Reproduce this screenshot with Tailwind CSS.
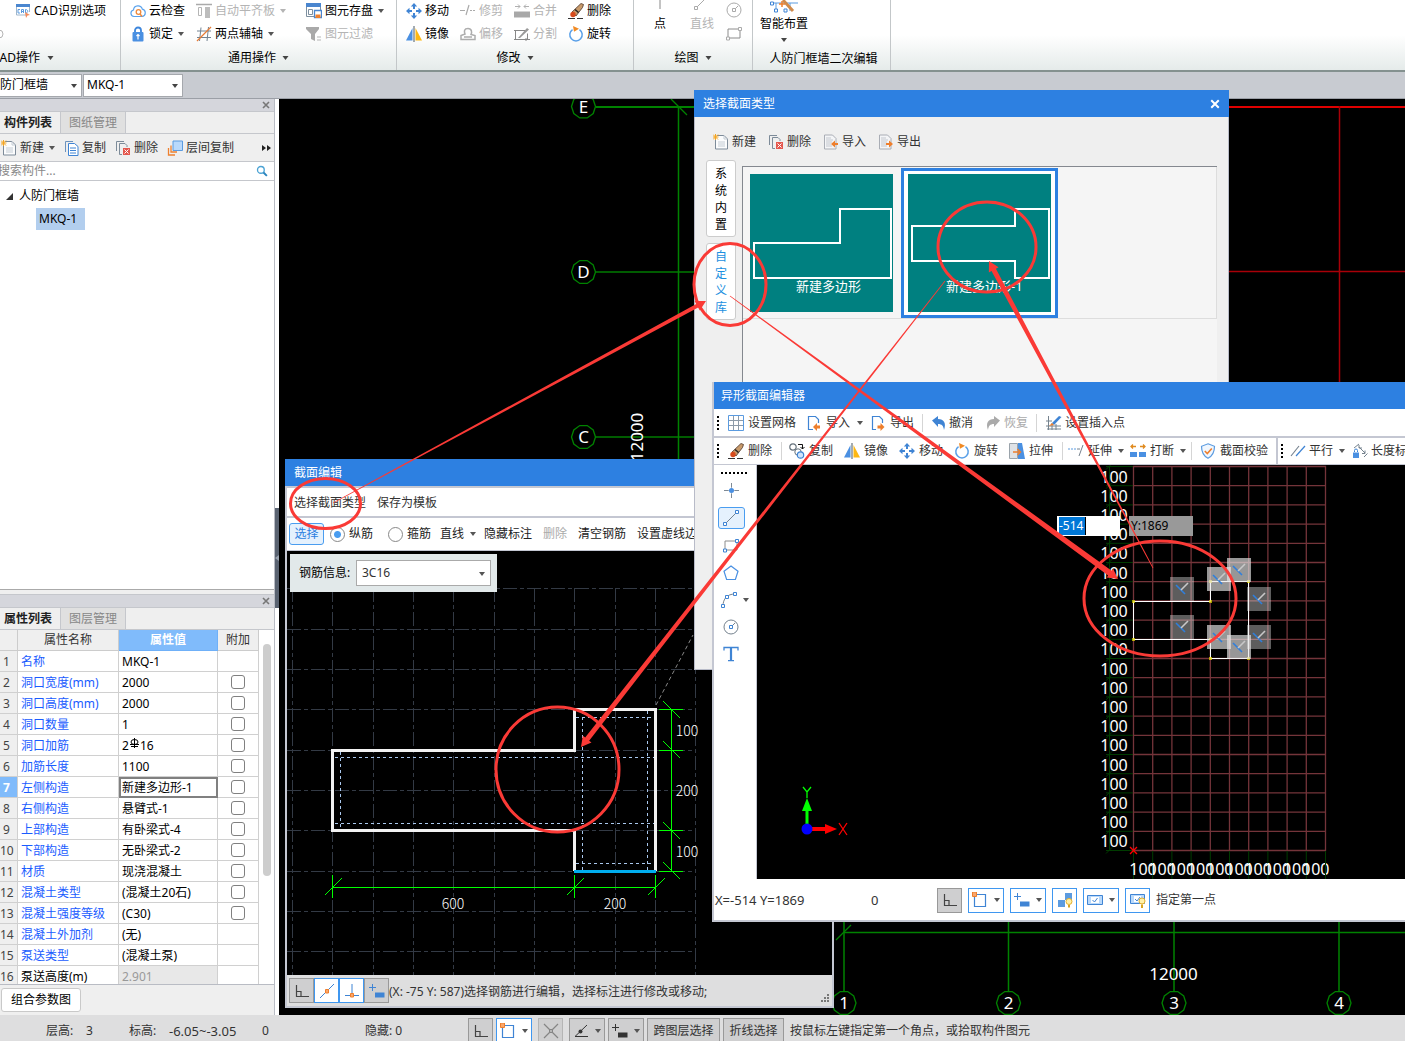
<!DOCTYPE html>
<html lang="zh-CN">
<head>
    <meta charset="UTF-8">
    <meta name="viewport" content="width=device-width, initial-scale=1.0">
    <title>人防门框墙</title>
    <script src="https://cdn.jsdelivr.net/npm/@tailwindcss/browser@4"></script>
</head>
<body class="relative flex h-screen flex-col overflow-hidden whitespace-nowrap bg-black font-['Noto_Sans','Noto_Sans_CJK_SC',sans-serif] text-[12px] leading-[18px] text-black">

    <!-- Icon sprite -->
    <svg class="hidden">
        <symbol id="caret" viewBox="0 0 6 4"><path d="M0 0h6L3 4z" fill="currentColor"/></symbol>
        <symbol id="close" viewBox="0 0 8 8"><path d="M1 1l6 6M7 1L1 7" stroke="currentColor" stroke-width="1.6" fill="none"/></symbol>
        <symbol id="cad" viewBox="0 0 16 16"><path d="M1.500 3v9h10M14.500 3v6" fill="none" stroke="#9fb6cc"/><path d="M1 1h14v3H1z" fill="#4a86cf"/><path d="M5 6.500H3v3.500h2M6.500 10V6.500h2V10M6.500 8.500h2M10.500 10V6.500c3 0 3 3.500 0 3.500" fill="none" stroke="#5b9be0"/><path d="M10 9l5 3-2.500.5L11 15z" fill="#f58b5b"/></symbol>
        <symbol id="cloud" viewBox="0 0 16 16"><path d="M4 13.500a3.300 3.300 0 0 1-.5-6.500 4.500 4.500 0 0 1 8.800-.8 3.700 3.700 0 0 1-.3 7.300z" fill="none" stroke="#5aa2ec" stroke-width="1.200"/><circle cx="8.500" cy="9" r="2.300" fill="none" stroke="#ef8a3c" stroke-width="1.300"/><path d="M10 11l2 2.500" stroke="#ef8a3c" stroke-width="1.500"/></symbol>
        <symbol id="lock" viewBox="0 0 16 16"><path d="M5 7V4.500a3 3 0 0 1 6 0V7" fill="none" stroke="#3d86dc" stroke-width="1.800"/><rect x="2.500" y="6" width="11" height="9.500" rx="1" fill="#4a90e2"/><path d="M8 8.500v5M6.500 10L8 8.500 9.500 10" stroke="#fff" stroke-width="1.200" fill="none"/></symbol>
        <symbol id="align" viewBox="0 0 16 16"><path d="M0 1.500h16" stroke="#aaa" stroke-width="1.500"/><path d="M2.500 4.500h3v8h-3z" fill="none" stroke="#b5b5b5"/><path d="M9 4h5v11H9z" fill="#bdbdbd"/></symbol>
        <symbol id="axis" viewBox="0 0 16 16"><path d="M5 1.500L3.500 15M12.500 1L11 15M1 5h14M1 11.500h14" stroke="#738392" fill="none"/><path d="M1 15L15 1" stroke="#e77b35" stroke-width="1.300"/></symbol>
        <symbol id="save" viewBox="0 0 16 16"><path d="M.5 1v12.500H9M14.500 1v6" fill="none" stroke="#7d8f9f"/><path d="M0 0h15v4H0z" fill="#4a86cf"/><path d="M2.500 6.500h4v5h-4z" fill="none" stroke="#7d8f9f"/><path d="M8.500 7.500h7v7h-7z" fill="#fff" stroke="#4a86cf" stroke-width="1.300"/><path d="M9.500 11.500h5V15h-5z" fill="#ee8130"/></symbol>
        <symbol id="filter" viewBox="0 0 16 16"><path d="M0 1h13v2L9 8v7l-4-2V8L0 3z" fill="#a9a9a9"/><path d="M11 11h4M11 14h4" stroke="#b5b5b5"/></symbol>
        <symbol id="move" viewBox="0 0 16 16"><path d="M8 0l3.200 3.500H9V6H7V3.500H4.800zM8 16l3.200-3.500H9V10H7v2.500H4.800zM0 8l3.500-3.200V7H6v2H3.500v2.200zM16 8l-3.500-3.200V7H10v2h2.500v2.200z" fill="#3f84d4"/></symbol>
        <symbol id="mirror" viewBox="0 0 16 16"><path d="M6.500 2v12.500H0z" fill="#4a90e2"/><path d="M9.500 2v12.500H16z" fill="#fdb813"/><path d="M8 0v16" stroke="#67737d" stroke-width="1.200"/></symbol>
        <symbol id="trim" viewBox="0 0 16 16"><path d="M0 7.500h5M6 12L9 2M10 7.500h2M13 7.500h2" stroke="#aaa" stroke-width="1.200"/></symbol>
        <symbol id="offset" viewBox="0 0 16 16"><path d="M1 13.500h14v-4l-4-1c1-2 1-6-3-6s-4 3-3 5.500l-4 1.500zM4 11h8" fill="none" stroke="#adadad" stroke-width="1.500"/></symbol>
        <symbol id="merge" viewBox="0 0 16 16"><path d="M1 9h6v5H1zM8 9h7v5H8z" fill="#a8a8a8"/><path d="M0 8.500h16v6H0z" fill="#a8a8a8"/><path d="M1 3.500h5M4 1.500l2 2-2 2M15 3.500h-5M12 1.500l-2 2 2 2" stroke="#b0b0b0" fill="none"/></symbol>
        <symbol id="split" viewBox="0 0 16 16"><path d="M11 4.500H1.500v9h12v-6M0 4.500h3M12 15v-3M0 13.500h16" fill="none" stroke="#888"/><path d="M4 12L13 2l2 1.500L6 12z" fill="#999"/></symbol>
        <symbol id="eraser" viewBox="0 0 16 16"><path d="M0 15.500h7M9 15.500h6" stroke="#333"/><path d="M4 9l9-8.500 2.500 1-1 3L8 13z" fill="#c89a6a" stroke="#4b3527" stroke-width=".8"/><path d="M7 6.500l3.500 3" stroke="#222" stroke-width="1.500"/><circle cx="5" cy="11.500" r="2.700" fill="#d64a1c"/></symbol>
        <symbol id="rotate" viewBox="0 0 16 16"><path d="M4.500 3.600A6.200 6.200 0 1 0 11.500 3.600" fill="none" stroke="#5aa0e8" stroke-width="1.500"/><path d="M5 0l6 2.700-5 3z" fill="#f08a24"/></symbol>
        <symbol id="circ" viewBox="0 0 16 16"><circle cx="8" cy="8" r="7" fill="none" stroke="currentColor"/><path d="M8 8l4-4" stroke="currentColor"/><path d="M6.500 6.500h3v3h-3z" fill="#fff" stroke="#3f84d4"/></symbol>
        <symbol id="circgray" viewBox="0 0 16 16"><circle cx="8" cy="8" r="7" fill="none" stroke="#aaa"/><path d="M8 8l4-4" stroke="#aaa"/><path d="M6.500 6.500h3v3h-3z" fill="#fff" stroke="#aaa"/></symbol>
        <symbol id="rect" viewBox="0 0 16 16"><path d="M2 3h12v9H2z" fill="none" stroke="#8c8c8c"/><path d="M.5 11h3v3h-3zM12.500 1.500h3v3h-3z" fill="#fff" stroke="currentColor"/></symbol>
        <symbol id="new" viewBox="0 0 16 16"><path d="M4 1.500h7L14.500 5v10h-12V6" fill="#fbfcfd" stroke="#7d8b99"/><path d="M11 1.500V5h3.500M5 8h7M5 10h7M5 12h7" fill="none" stroke="#c4ccd4"/><path d="M0 .5l5 5M5 .5l-5 5M2.500 0v6M0 3h5.500" stroke="#f5a623"/></symbol>
        <symbol id="copy" viewBox="0 0 16 16"><path d="M1.500 12V1.500H9" fill="none" stroke="#6c92bd"/><path d="M4.500 3.500h6l3.500 3v9H4.500z" fill="#fff" stroke="#3f84d4"/><path d="M6 8h6M6 10.500h6M6 13h6" stroke="#3f84d4"/></symbol>
        <symbol id="del" viewBox="0 0 16 16"><path d="M1.500 11V1.500H9M12 7V5.500L10 3.500H4.500v11H7" fill="none" stroke="#7d8b99"/><path d="M8 8h7v7H8z" fill="#e4574d"/><path d="M9.500 9.500l4 4M13.500 9.500l-4 4" stroke="#fff"/></symbol>
        <symbol id="floors" viewBox="0 0 16 16"><path d="M1.500 8v7H8M4 5.500V12h6" fill="none" stroke="#ee8130" stroke-width="1.300"/><path d="M6 1h9.500v9.500H6z" fill="#b9d9fb" stroke="#5b9be0"/></symbol>
        <symbol id="search" viewBox="0 0 16 16"><circle cx="6.500" cy="6.500" r="4.500" fill="none" stroke="#4ca3d4" stroke-width="1.800"/><path d="M10 10l4.500 4.500" stroke="#2a84be" stroke-width="2.500"/></symbol>
        <symbol id="pagein" viewBox="0 0 16 16"><path d="M1.500 1h8L13 4.500V15H1.500z" fill="#f4f5f7" stroke="#a9adb5"/><path d="M3 4h5M3 6h7M3 8h6M3 10h5M3 12h6" stroke="#c3c7ce"/><path d="M8 10l4-3.500v2.500h3v2h-3v2.500z" fill="#ee7f2d"/></symbol>
        <symbol id="pageout" viewBox="0 0 16 16"><path d="M1.500 1h8L13 4.500V15H1.500z" fill="#f4f5f7" stroke="#a9adb5"/><path d="M3 4h5M3 6h7M3 8h6M3 10h5M3 12h6" stroke="#c3c7ce"/><path d="M15 10l-4-3.500v2.500H8v2h3v2.500z" fill="#ee7f2d"/></symbol>
        <symbol id="docin" viewBox="0 0 16 16"><path d="M6 14.500H1.500V1.500h7l3 3V8" fill="none" stroke="#3f84d4" stroke-width="1.200"/><path d="M6 12l4-4v2.500h3v3h-3V16z" fill="#ee7f2d"/></symbol>
        <symbol id="docout" viewBox="0 0 16 16"><path d="M5 14.500H1.500V1.500h7l3 3V8" fill="none" stroke="#3f84d4" stroke-width="1.200"/><path d="M13.500 12l-4-4v2.500h-3v3h3V16z" fill="#ee7f2d"/></symbol>
        <symbol id="gridic" viewBox="0 0 16 16"><path d="M.5 5.500h15M.5 10.500h15M5.500.5v15M10.500.5v15" stroke="#8c9aa8"/><path d="M.5.5h15v15H.5z" fill="none" stroke="#5b9be0"/></symbol>
        <symbol id="undo" viewBox="0 0 16 16"><path d="M1 5.500L7 1v3c6 0 8.500 4 6 11-.5-4-2-6-6-6v3z" fill="currentColor"/></symbol>
        <symbol id="redo" viewBox="0 0 16 16"><path d="M15 5.500L9 1v3C3 4 .5 8 3 15c.5-4 2-6 6-6v3z" fill="currentColor"/></symbol>
        <symbol id="insert" viewBox="0 0 16 16"><path d="M2.500 1v14M0 6h6M0 11h15M6 8v7M10 9v6M1 14h14" stroke="#75828e" fill="none"/><path d="M6 8l7-7 2.500 1L8 10z" fill="#3f84d4"/><path d="M3 11l3-3 2 2z" fill="#ee7f2d"/></symbol>
        <symbol id="dup" viewBox="0 0 16 16"><circle cx="4" cy="4" r="3.200" fill="none" stroke="#67737d" stroke-width="1.200"/><circle cx="9" cy="9" r="3.200" fill="none" stroke="#67737d"/><circle cx="11.500" cy="12" r="3.200" fill="#cfe4fb" stroke="#3f84d4" stroke-width="1.200"/><path d="M9 1.500h4.500V6M11.500 4l2 2 2-2" fill="none" stroke="#111"/></symbol>
        <symbol id="stretch" viewBox="0 0 16 16"><path d="M.5.5h8v15h-8z" fill="#dfe2e6" stroke="#9aa3ab"/><path d="M9 0h4l3 16H9z" fill="#4a90e2"/><path d="M4 9h7M8.500 6l3 3-3 3" fill="none" stroke="#ee7f2d" stroke-width="1.400"/></symbol>
        <symbol id="extend" viewBox="0 0 16 16"><path d="M0 6h9" stroke="#5b9be0" stroke-dasharray="2 1"/><path d="M9 6h3M11 13l4-11" stroke="#75828e" fill="none"/></symbol>
        <symbol id="break" viewBox="0 0 16 16"><path d="M0 9h7v5H0zM9 9h7v5H9z" fill="#4a90e2"/><path d="M6 3.500H1M3 1.500l-2 2 2 2M10 3.500h5M13 1.500l2 2-2 2" stroke="#e08a1e" fill="none" stroke-width="1.300"/></symbol>
        <symbol id="shield" viewBox="0 0 16 16"><path d="M8 .8l6.500 2.500c0 6-1.500 9.500-6.500 12C3 12.800 1.500 9.300 1.500 3.300z" fill="#f1f7fe" stroke="#5b9be0" stroke-width="1.200"/><path d="M4.800 8l2.500 2.500 4.500-5" fill="none" stroke="#ee7f2d" stroke-width="1.600"/></symbol>
        <symbol id="parallel" viewBox="0 0 16 16"><path d="M1 13L9 3" stroke="#75828e" stroke-width="1.200"/><path d="M6 13l9-10" stroke="#3f84d4" stroke-width="1.200"/></symbol>
        <symbol id="lenlock" viewBox="0 0 16 16"><path d="M1 9.500h6V15H1z" fill="#4a90e2"/><path d="M2.500 9V7.500a1.500 1.500 0 0 1 3 0V9" fill="none" stroke="#3f84d4"/><path d="M2 5l5-4M7 4l6 6M7 2v3h3M10 10.500h3V7.500M12 14l3.500-3.500" fill="none" stroke="#75828e"/></symbol>
        <symbol id="ortho" viewBox="0 0 16 16"><path d="M2.500 2v11.500H15M2.500 8.500h4.500v5" fill="none" stroke="#444" stroke-width="1.200"/></symbol>
        <symbol id="snap" viewBox="0 0 16 16"><path d="M2.500 2.500h11v12h-11z" fill="none" stroke="#3f84d4" stroke-width="1.200"/><path d="M.5 0h4v4.500h-4z" fill="#f9a66b" stroke="#ee7f2d"/></symbol>
        <symbol id="plusbox" viewBox="0 0 16 16"><path d="M0 4.500h7M3.500 1v7" stroke="currentColor"/><path d="M6 9.500h9.500v5H6z" fill="currentColor"/></symbol>
        <symbol id="slash" viewBox="0 0 16 16"><path d="M1 15L15 1" stroke="#3f84d4"/><path d="M6.500 6.500h3v3.500h-3z" fill="#f9a66b" stroke="#ee7f2d"/></symbol>
        <symbol id="perp" viewBox="0 0 16 16"><path d="M8 1v12M1 12.500h14" stroke="#3f84d4"/><path d="M6.500 10.500h3v3.500h-3z" fill="#f9a66b" stroke="#ee7f2d"/></symbol>
        <symbol id="cross" viewBox="0 0 16 16"><path d="M1 1l14 14M15 1L1 15" stroke="#858585" stroke-width="1.200"/><path d="M6.500 6.500h3v3h-3z" fill="#b5b5b5" stroke="#858585"/></symbol>
        <symbol id="angle" viewBox="0 0 16 16"><path d="M14 2L2 13.500h13" fill="none" stroke="#333"/><circle cx="7.500" cy="8.500" r="2" fill="#333"/></symbol>
        <symbol id="bulbbox" viewBox="0 0 16 16"><path d="M1 8h7v7H1zM8 1h7v7H8z" fill="#5b9be0"/><circle cx="12" cy="9.500" r="3" fill="#fff0a8" stroke="#e0b030"/><path d="M11 13h2v2.500h-2z" fill="#d9a520"/></symbol>
        <symbol id="check" viewBox="0 0 16 16"><path d="M.5 3.500h15v9H.5z" fill="#b9d9fb" stroke="#3f84d4"/><path d="M4 5h8v6H4z" fill="#fff"/><path d="M5.500 8l2 2 3-4" fill="none" stroke="#3f84d4"/></symbol>
        <symbol id="checkbulb" viewBox="0 0 16 16"><path d="M.5 2.500h14v9H.5z" fill="#b9d9fb" stroke="#3f84d4"/><path d="M4 4h7v6H4z" fill="#fff"/><path d="M5 7l2 2 3-4" fill="none" stroke="#3f84d4"/><circle cx="12" cy="9" r="3" fill="#fff0a8" stroke="#e0b030"/><path d="M11 12.500h2V16h-2z" fill="#d9a520"/></symbol>
        <symbol id="point" viewBox="0 0 16 16"><path d="M0 8h5M11 8h5M8 0v5M8 11v5" stroke="#75828e"/><circle cx="8" cy="8" r="2.700" fill="#4a90e2"/></symbol>
        <symbol id="line" viewBox="0 0 16 16"><path d="M2 14L14 2" stroke="#75828e"/><path d="M.5 12.500h3v3h-3zM12.500.5h3v3h-3z" fill="#fff" stroke="currentColor"/></symbol>
        <symbol id="penta" viewBox="0 0 16 16"><path d="M8 1l7 5.200-2.600 8.300H3.600L1 6.200z" fill="none" stroke="#4a90e2" stroke-width="1.200"/></symbol>
        <symbol id="arc" viewBox="0 0 16 16"><path d="M2 14C2 7 6 2 14 2" fill="none" stroke="#75828e"/><path d="M.5 12.500h3v3h-3zM4.500 3.500h3v3h-3zM12.500.5h3v3h-3z" fill="#fff" stroke="#3f84d4"/></symbol>
        <symbol id="text" viewBox="0 0 16 16"><path d="M1 4.500V1.500h14v3M5 14.700h6" fill="none" stroke="#3f84d4" stroke-width="1.300"/><path d="M8 1.500v13" stroke="#3f84d4" stroke-width="2.200"/></symbol>
        <symbol id="constraint" viewBox="0 0 24 24"><path d="M6 8l9 9" stroke="#2f7fdc" stroke-width="1.600"/><path d="M11 13l7-7" stroke="#c8c8c8" stroke-width="1.600"/></symbol>
    </svg>

    <!-- Ribbon -->
    <header class="flex h-[72px] shrink-0 border-b-2 border-[#84918f] bg-linear-to-b from-white from-50% to-[#e5ebea]">
        <section class="flex w-[121px] flex-col border-r border-[#c3c7c9]">
            <button class="flex h-[23px] items-center gap-[3px] pl-[15px]"><svg class="size-4"><use href="#cad"/></svg>CAD识别选项</button>
            <svg class="h-[23px] w-4"><circle cx="-1" cy="11" r="4" fill="none" stroke="#b5b5b5"/></svg>
            <button class="-ml-2 flex h-[25px] items-center gap-[7px]">CAD操作 <svg class="h-1 w-[7px] text-[#444]"><use href="#caret"/></svg></button>
        </section>
        <section class="flex w-[276px] flex-col border-r border-[#c3c7c9]">
            <div class="grid h-[46px] grid-cols-[66px_110px_auto] grid-rows-2 pl-[9px]">
                <button class="flex items-center gap-[3px]"><svg class="size-4"><use href="#cloud"/></svg>云检查</button>
                <button class="flex items-center gap-[3px] text-[#b4b4b4]"><svg class="size-4"><use href="#align"/></svg>自动平齐板<svg class="ml-0.5 h-1 w-[6px]"><use href="#caret"/></svg></button>
                <button class="flex items-center gap-[3px]"><svg class="size-4"><use href="#save"/></svg>图元存盘<svg class="ml-0.5 h-1 w-[6px] text-[#555]"><use href="#caret"/></svg></button>
                <button class="flex items-center gap-[3px]"><svg class="size-4"><use href="#lock"/></svg>锁定<svg class="ml-0.5 h-1 w-[6px] text-[#555]"><use href="#caret"/></svg></button>
                <button class="flex items-center gap-[3px]"><svg class="size-4"><use href="#axis"/></svg>两点辅轴<svg class="ml-0.5 h-1 w-[6px] text-[#555]"><use href="#caret"/></svg></button>
                <button class="flex items-center gap-[3px] text-[#b4b4b4]"><svg class="size-4"><use href="#filter"/></svg>图元过滤</button>
            </div>
            <button class="flex h-[25px] items-center justify-center gap-[6px]">通用操作 <svg class="h-1 w-[7px] text-[#444]"><use href="#caret"/></svg></button>
        </section>
        <section class="flex w-[237px] flex-col border-r border-[#c3c7c9]">
            <div class="grid h-[46px] grid-cols-[54px_54px_54px_auto] grid-rows-2 pl-[9px]">
                <button class="flex items-center gap-[3px]"><svg class="size-4"><use href="#move"/></svg>移动</button>
                <button class="flex items-center gap-[3px] text-[#b4b4b4]"><svg class="size-4"><use href="#trim"/></svg>修剪</button>
                <button class="flex items-center gap-[3px] text-[#b4b4b4]"><svg class="size-4"><use href="#merge"/></svg>合并</button>
                <button class="flex items-center gap-[3px]"><svg class="size-4"><use href="#eraser"/></svg>删除</button>
                <button class="flex items-center gap-[3px]"><svg class="size-4"><use href="#mirror"/></svg>镜像</button>
                <button class="flex items-center gap-[3px] text-[#b4b4b4]"><svg class="size-4"><use href="#offset"/></svg>偏移</button>
                <button class="flex items-center gap-[3px] text-[#b4b4b4]"><svg class="size-4"><use href="#split"/></svg>分割</button>
                <button class="flex items-center gap-[3px]"><svg class="size-4"><use href="#rotate"/></svg>旋转</button>
            </div>
            <button class="flex h-[25px] items-center justify-center gap-[6px]">修改 <svg class="h-1 w-[7px] text-[#444]"><use href="#caret"/></svg></button>
        </section>
        <section class="flex w-[119px] flex-col border-r border-[#c3c7c9]">
            <div class="flex h-[46px] pl-[14px]">
                <button class="flex w-6 flex-col items-center"><svg class="h-[15px] w-4 shrink-0"><path d="M8 0v9" stroke="#888"/></svg>点</button>
                <button class="ml-[14px] flex w-8 flex-col items-center text-[#b4b4b4]"><svg class="h-[15px] w-4 shrink-0"><path d="M2 8l9-9" stroke="#aaa"/><path d="M.5 6.500h3v3h-3z" fill="#fff" stroke="#aaa"/></svg>直线</button>
                <div class="ml-2 flex flex-col items-center gap-2 pt-0.5 text-[#aaa]">
                    <button aria-label="圆" class="size-4"><svg class="size-4"><use href="#circgray"/></svg></button>
                    <button aria-label="矩形" class="size-4"><svg class="size-4"><use href="#rect"/></svg></button>
                </div>
            </div>
            <button class="flex h-[25px] items-center justify-center gap-[6px]">绘图 <svg class="h-1 w-[7px] text-[#444]"><use href="#caret"/></svg></button>
        </section>
        <section class="flex w-[138px] flex-col border-r border-[#c3c7c9]">
            <button class="flex h-[49px] w-[62px] flex-col items-center">
                <svg class="h-[15px] w-8 shrink-0"><path d="M2 3h28M8 3v8M22 3v8" stroke="#5b9be0"/><path d="M11 4h6M14 1v6" stroke="#ee7f2d" stroke-width="1.500"/><path d="M15 0l10 11" stroke="#d08a4a" stroke-width="3"/><path d="M2.500 2h3v3h-3zM6.500 9h3v3h-3zM16 9h3v3h-3z" fill="#fff" stroke="#3f84d4"/></svg>
                智能布置
                <svg class="mt-[5px] h-1 w-[6px] shrink-0 text-[#444]"><use href="#caret"/></svg>
            </button>
            <span class="pl-1 text-center leading-[23px]">人防门框墙二次编辑</span>
        </section>
    </header>

    <!-- Component pickers -->
    <div class="flex h-[27px] shrink-0 items-center gap-px border-b border-[#9b9fa6] bg-[#c8cbd1]">
        <label class="relative -ml-[13px] w-[95px]">
            <select aria-label="构件类型" class="h-[23px] w-full appearance-none border border-[#a5a8ad] bg-white p-0"><option>人防门框墙</option></select>
            <svg class="absolute top-[10px] right-[5px] h-1 w-[6px] text-[#444]"><use href="#caret"/></svg>
        </label>
        <label class="relative w-[100px]">
            <select aria-label="构件" class="h-[23px] w-full appearance-none border border-[#a5a8ad] bg-white px-[3px]"><option>MKQ-1</option></select>
            <svg class="absolute top-[10px] right-[5px] h-1 w-[6px] text-[#444]"><use href="#caret"/></svg>
        </label>
    </div>

    <main class="flex min-h-0 flex-1">
        <!-- Left dock -->
        <aside class="flex w-[275px] shrink-0 flex-col border-r border-[#b9bcc4] bg-[#efefef]">
            <div class="flex h-3 shrink-0 items-center justify-end bg-[#d5d6dc] pr-1 text-[#777]"><button aria-label="关闭" class="size-2"><svg class="size-2"><use href="#close"/></svg></button></div>
            <div class="flex h-[23px] shrink-0 border-y border-[#c5c7cc]">
                <button class="w-[60px] pl-1 text-left font-bold text-[#222]">构件列表</button>
                <button class="w-[66px] border-x border-[#c5c7cc] bg-[#e0e0e0] text-[#888]">图纸管理</button>
            </div>
            <div class="flex h-[27px] shrink-0 items-center text-[#333]">
                <button class="flex w-[64px] items-center gap-[3px] pl-px"><svg class="size-4"><use href="#new"/></svg>新建<svg class="ml-0.5 h-1 w-[6px] text-[#555]"><use href="#caret"/></svg></button>
                <button class="flex w-[51px] items-center gap-[2px]"><svg class="size-4"><use href="#copy"/></svg>复制</button>
                <button class="flex w-[52px] items-center gap-[3px]"><svg class="size-4"><use href="#del"/></svg>删除</button>
                <button class="flex items-center gap-[3px]"><svg class="size-4"><use href="#floors"/></svg>层间复制</button>
                <button aria-label="更多" class="ml-auto pr-[3px]"><svg class="h-2 w-[9px]"><path d="M0 1l4 3-4 3zM5 1l4 3-4 3z" fill="#222"/></svg></button>
            </div>
            <label class="flex h-5 shrink-0 items-center border-y border-[#c5c7cc] bg-white pr-[6px]">
                <input type="search" aria-label="搜索构件" placeholder="搜索构件..." class="-ml-0.5 min-w-0 flex-1 text-[#333] outline-none placeholder:text-[#888]">
                <svg class="size-3"><use href="#search"/></svg>
            </label>
            <div class="h-[409px] shrink-0 border-b border-[#aaa] bg-white pt-[6px]">
                <div class="flex items-center gap-[6px] pl-[6px]"><svg class="size-[7px]"><path d="M7 0v7H0z" fill="#333"/></svg>人防门框墙</div>
                <div class="mt-[3px] ml-9 w-[49px] bg-[#b2ceee] pl-[3px] leading-[22px]">MKQ-1</div>
            </div>
            <div class="mt-1 flex h-[13px] shrink-0 items-center justify-end border-t border-[#c5c7cc] bg-[#d5d6dc] pr-1 text-[#777]"><button aria-label="关闭" class="size-2"><svg class="size-2"><use href="#close"/></svg></button></div>
            <div class="flex h-[23px] shrink-0 border-y border-[#c5c7cc]">
                <button class="w-[60px] pl-1 text-left font-bold text-[#222]">属性列表</button>
                <button class="w-[66px] border-x border-[#c5c7cc] bg-[#e0e0e0] text-[#888]">图层管理</button>
            </div>
            <div class="flex min-h-0 flex-1 overflow-hidden border-b border-[#b9bcc4] bg-white">
                <div class="w-[259px]">
                    <table class="w-full table-fixed border-separate border-spacing-0">
                        <colgroup><col class="w-[18px]"><col class="w-[101px]"><col class="w-[99px]"><col class="w-[41px]"></colgroup>
                        <thead class="bg-[#efefef] text-[#333]">
                            <tr>
                                <th class="h-[21px] border-r border-b border-[#ccc] p-0"></th>
                                <th class="h-[21px] border-r border-b border-[#ccc] p-0 font-normal">属性名称</th>
                                <th class="h-[21px] border-r border-b border-[#6fb0f8] bg-[#80bbfb] p-0 font-bold text-white">属性值</th>
                                <th class="h-[21px] border-r border-b border-[#ccc] p-0 font-normal">附加</th>
                            </tr>
                        </thead>
                        <tbody id="props"></tbody>
                    </table>
                </div>
                <div class="flex-1 pt-[14px] pl-1"><div class="h-[232px] w-2 rounded-full bg-[#cdcdcd]"></div></div>
            </div>
            <div class="h-[30px] shrink-0 pt-[3px] pl-px"><button class="h-6 rounded-[3px] border border-[#c9c9c9] bg-white px-[9px]">组合参数图</button></div>
        </aside>
        <div class="w-1 shrink-0 bg-white"><div class="mt-[409px] flex h-[100px] items-center bg-[#5a6371]"><svg class="h-[6px] w-1"><path d="M4 0v6L0 3z" fill="#9aa3b0"/></svg></div></div>

        <!-- Plan view -->
        <section class="min-w-0 flex-1 bg-black">
            <svg class="size-full">
                <g transform="translate(-279 -99)" fill="none" stroke="#008200">
                    <path d="M596 107h640" stroke-width="2"/>
                    <path d="M596 272h100M596 437h100" stroke-width="2" stroke="#005c00"/>
                    <path d="M678.500 106v354" stroke-width="1.500"/>
                    <path d="M671 99l16 16" stroke-width="1.300"/>
                    <path d="M1229 107h176" stroke="#e00000" stroke-width="2"/>
                    <path d="M1229 271.500h176M1339.500 106v280" stroke="#a80008" stroke-width="1.500"/>
                    <path d="M843.500 932.500h561.500M844 920v71M1008.500 920v71M1174 920v71M1339 920v71" stroke-width="1.500"/>
                    <path d="M836 940l15-15" stroke-width="1.300"/>
                    <g id="bubbles"></g>
                    <text x="1173.500" y="980" text-anchor="middle" class="fill-white stroke-none text-[17px]">12000</text>
                    <text transform="translate(643 437) rotate(-90)" text-anchor="middle" class="fill-white stroke-none text-[17px]">12000</text>
                </g>
            </svg>
        </section>
    </main>

    <!-- Status bar -->
    <footer class="flex h-[26px] shrink-0 items-center overflow-hidden bg-[#dededf] pt-[5px] text-[#333]">
        <span class="w-[83px] pl-[46px]">层高:</span><span class="w-[46px] pl-[3px]">3</span>
        <span class="w-[40px]">标高:</span><span class="w-[93px] text-[13px]">-6.05~-3.05</span>
        <span class="w-[103px]">0</span>
        <span class="w-[103px]">隐藏: 0</span>
        <div class="flex h-[25px] items-stretch gap-[3px]">
            <button aria-label="正交" class="flex w-[25px] items-center justify-center border border-[#999] bg-[#cfcfd0]"><svg class="size-4"><use href="#ortho"/></svg></button>
            <button aria-label="捕捉" class="flex w-9 items-center justify-between border border-[#3f97f0] bg-white px-[3px]"><svg class="size-4"><use href="#snap"/></svg><svg class="h-1 w-[6px] text-[#555]"><use href="#caret"/></svg></button>
            <button aria-label="交点" class="mx-[3px] flex w-[25px] items-center justify-center border border-[#b5b5b5] bg-[#cfcfd0]"><svg class="size-4"><use href="#cross"/></svg></button>
            <button aria-label="角度" class="flex w-9 items-center justify-between border border-[#999] bg-[#cfcfd0] px-[3px]"><svg class="size-4"><use href="#angle"/></svg><svg class="h-1 w-[6px] text-[#555]"><use href="#caret"/></svg></button>
            <button aria-label="输入" class="flex w-9 items-center justify-between border border-[#999] bg-[#cfcfd0] px-[3px]"><svg class="size-4"><use href="#plusbox"/></svg><svg class="h-1 w-[6px] text-[#555]"><use href="#caret"/></svg></button>
            <button class="w-[73px] border border-[#999] bg-[#cfcfd0]">跨图层选择</button>
            <button class="w-[61px] border border-[#999] bg-[#cfcfd0]">折线选择</button>
        </div>
        <span class="pl-[6px]">按鼠标左键指定第一个角点，或拾取构件图元</span>
    </footer>

    <!-- Window: section editing -->
    <div class="absolute top-[459px] left-[285px] flex h-[549px] w-[549px] flex-col border-2 border-t-0 border-[#c4c7d2] bg-white">
        <div class="-mx-0.5 h-[27px] shrink-0 bg-[#2d80e1] pl-[9px] leading-[28px] text-white">截面编辑</div>
        <div class="flex h-8 shrink-0 items-center border-y-2 border-[#c4c7d2] pt-px pl-[7px] text-[#333]">
            <button class="w-[83px] text-left">选择截面类型</button><button>保存为模板</button>
        </div>
        <div class="flex h-[33px] shrink-0 items-center border-b border-[#c4c7d2] pl-0.5 text-[#222]">
            <button class="mr-[6px] h-[22px] w-[35px] rounded-[3px] border border-[#4a9df0] bg-[#e5f1fd] text-[#2b7fe0]">选择</button>
            <label class="flex w-[58px] items-center gap-[4px]"><input type="radio" name="bar" checked class="size-[15px] appearance-none rounded-full border border-[#888] bg-[radial-gradient(circle,#4a9df0_3px,#fff_4px)]">纵筋</label>
            <label class="flex w-[52px] items-center gap-[4px]"><input type="radio" name="bar" class="size-[15px] appearance-none rounded-full border border-[#888]">箍筋</label>
            <button class="flex w-[44px] items-center gap-[6px]">直线<svg class="h-1 w-[6px] text-[#555]"><use href="#caret"/></svg></button>
            <button class="w-[59px] text-left">隐藏标注</button>
            <button class="w-[35px] text-left text-[#aaa]">删除</button>
            <button class="w-[59px] text-left">清空钢筋</button>
            <button>设置虚线边</button>
        </div>
        <div class="relative min-h-0 flex-1 bg-black">
            <svg class="size-full">
                <g transform="translate(-287 -551)" fill="none">
                    <g id="section-grid" stroke="#333a45" stroke-dasharray="14 3 4 3"></g>
                    <path d="M656 705l37-70" stroke="#888" stroke-dasharray="4 3"/>
                    <path d="M335 757.500h320M335 823.500h320M340.500 752v78M582.500 711v160M647.500 711v160M576 717.500h79M576 863.500h79" stroke="#a9c8ee" stroke-dasharray="3 3"/>
                    <path d="M574.500 871V830.500H332.500v-80h242v-41h81V871" stroke="#f2f2f2" stroke-width="3"/>
                    <path d="M574 871.500h82" stroke="#00aeef" stroke-width="3"/>
                    <path d="M671.500 709v162M659 709.500h24M659 750.500h24M659 830.500h24M659 871.500h24M663 701l17 17M663 741l17 17M663 822l17 17M663 862l17 17M332 887.500h324M332.500 875v23M574.500 875v23M655.500 875v23M325 895l17-17M567 895l17-17M648 895l17-17" stroke="#0f0"/>
                    <g class="fill-white font-['Noto_Sans_CJK_SC',sans-serif] text-[14px] font-light" text-anchor="middle">
                        <text x="687" y="736">100</text><text x="687" y="796">200</text><text x="687" y="857">100</text>
                        <text x="453" y="909">600</text><text x="615" y="909">200</text>
                    </g>
                </g>
            </svg>
            <label class="absolute top-[3px] left-[3px] flex h-[38px] w-[207px] items-center bg-[#e2e9ea] pl-[9px]">
                <span class="w-[57px]">钢筋信息:</span>
                <select class="h-[26px] w-[135px] appearance-none border border-[#aaa] bg-white px-[5px] text-[#333]"><option>3C16</option></select>
                <svg class="absolute top-[18px] right-3 h-1 w-[6px] text-[#555]"><use href="#caret"/></svg>
            </label>
        </div>
        <div class="flex h-[31px] shrink-0 items-center bg-[#dededf] pl-0.5 text-[#333]">
            <button aria-label="正交" class="flex h-[25px] w-[25px] items-center justify-center border border-[#999] bg-[#cfcfd0]"><svg class="size-4"><use href="#ortho"/></svg></button>
            <button aria-label="最近点" class="flex h-[25px] w-[25px] items-center justify-center border border-[#3f97f0] bg-white"><svg class="size-4"><use href="#slash"/></svg></button>
            <button aria-label="垂足" class="flex h-[25px] w-[25px] items-center justify-center border border-[#3f97f0] bg-white"><svg class="size-4"><use href="#perp"/></svg></button>
            <button aria-label="输入" class="flex h-[25px] w-[25px] items-center justify-center border border-[#999] bg-[#cfcfd0] text-[#3f84d4]"><svg class="size-4"><use href="#plusbox"/></svg></button>
            <span class="pt-0.5">(X: -75 Y: 587)选择钢筋进行编辑，选择标注进行修改或移动;</span>
            <svg class="mt-[14px] mr-[3px] ml-auto size-2"><path d="M6 0h2v2H6zM3 3h2v2H3zM6 3h2v2H6zM0 6h2v2H0zM3 6h2v2H3zM6 6h2v2H6z" fill="#777"/></svg>
        </div>
    </div>

    <!-- Window: section type -->
    <div class="absolute top-[90px] left-[694px] flex h-[580px] w-[535px] flex-col border border-t-0 border-[#b8bbc8] bg-[#efefef]">
        <div class="-mx-px flex h-[27px] shrink-0 items-center justify-between bg-[#2d80e1] pr-[9px] pl-[9px] text-white">选择截面类型<button aria-label="关闭" class="size-[10px]"><svg class="size-[10px]"><use href="#close"/></svg></button></div>
        <div class="flex h-[49px] shrink-0 items-center pl-[18px] text-[#333]">
            <button class="flex w-[55px] items-center gap-[3px]"><svg class="size-4"><use href="#new"/></svg>新建</button>
            <button class="flex w-[55px] items-center gap-[3px]"><svg class="size-4"><use href="#del"/></svg>删除</button>
            <button class="flex w-[55px] items-center gap-[3px]"><svg class="size-4"><use href="#pagein"/></svg>导入</button>
            <button class="flex w-[55px] items-center gap-[3px]"><svg class="size-4"><use href="#pageout"/></svg>导出</button>
        </div>
        <div class="flex min-h-0 flex-1 pr-[11px] pl-[11px]">
            <div class="-mt-[6px] mr-[6px] flex w-[30px] flex-col gap-[6px]">
                <button class="h-[77px] rounded-[3px] border border-[#ccc] bg-white px-2 leading-[17px] whitespace-normal">系统内置</button>
                <button class="h-[77px] rounded-[3px] border border-[#ccc] bg-white px-2 leading-[17px] whitespace-normal text-[#1b8fe0]">自定义库</button>
            </div>
            <div class="flex-1 border-t border-l border-[#84888f] bg-[#f5f5f5]">
                <div class="flex h-[152px] border-r border-b border-[#ddd] pt-px">
                    <figure class="relative h-[150px] w-[158px] pt-[6px] pl-[7px]">
                        <svg class="h-[138px] w-[143px] bg-[#008080]"><path d="M4 69h86V35h51v69H4z" fill="none" stroke="#fff" stroke-width="2"/></svg>
                        <figcaption class="absolute top-[109px] left-[53px] text-[13px] text-white">新建多边形</figcaption>
                    </figure>
                    <figure class="relative h-[150px] w-[157px] border-[3px] border-[#2d80e1] bg-white pt-[3px] pl-1">
                        <svg class="h-[138px] w-[143px] bg-[#008080]"><path d="M4 52h103V35h34v69h-34V87H4z" fill="none" stroke="#fff" stroke-width="2"/></svg>
                        <figcaption class="absolute top-[106px] left-[42px] text-[13px] text-white">新建多边形-1</figcaption>
                    </figure>
                </div>
            </div>
        </div>
    </div>

    <!-- Window: irregular section editor, runs past the right edge -->
    <div class="absolute top-[382px] right-0 left-[712px] flex h-[540px] flex-col overflow-hidden border-b-2 border-l-2 border-[#c4c7d2] bg-white text-[#333]">
        <div class="-ml-0.5 h-[27px] shrink-0 bg-[#2d80e1] pl-[9px] leading-[28px] text-white">异形截面编辑器</div>
        <div class="flex h-[29px] shrink-0 items-center border-b-2 border-[#c4c7d2] pt-px pl-[3px]">
            <div class="mr-[9px] h-[14px] w-0 border-l-2 border-dotted border-black"></div>
            <button class="flex w-[79px] shrink-0 items-center gap-1"><svg class="size-4"><use href="#gridic"/></svg>设置网格</button>
            <button class="flex w-[64px] shrink-0 items-center gap-[3px]"><svg class="size-4"><use href="#docin"/></svg>导入<svg class="ml-1 h-1 w-[6px] text-[#555]"><use href="#caret"/></svg></button>
            <button class="flex w-[51px] shrink-0 items-center gap-[3px]"><svg class="size-4"><use href="#docout"/></svg>导出</button>
            <div class="mr-[8px] h-[18px] w-px bg-[#d5d5d5]"></div>
            <button class="flex w-[54px] shrink-0 items-center gap-[2px]"><svg class="size-4 text-[#3f84d4]"><use href="#undo"/></svg>撤消</button>
            <button class="flex w-[51px] shrink-0 items-center gap-[3px] text-[#aaa]"><svg class="size-4"><use href="#redo"/></svg>恢复</button>
            <div class="mr-[9px] h-[18px] w-px bg-[#d5d5d5]"></div>
            <button class="flex shrink-0 items-center gap-[3px]"><svg class="size-4"><use href="#insert"/></svg>设置插入点</button>
        </div>
        <div class="flex h-[27px] shrink-0 items-center border-b border-[#c4c7d2] pl-[3px]">
            <div class="mr-[9px] h-[14px] w-0 shrink-0 border-l-2 border-dotted border-black"></div>
            <button class="flex w-[53px] shrink-0 items-center gap-[4px]"><svg class="size-4"><use href="#eraser"/></svg>删除</button>
            <div class="mr-[7px] h-[18px] w-px shrink-0 bg-[#d5d5d5]"></div>
            <button class="flex w-[55px] shrink-0 items-center gap-[4px]"><svg class="size-4"><use href="#dup"/></svg>复制</button>
            <button class="flex w-[55px] shrink-0 items-center gap-[4px]"><svg class="size-4"><use href="#mirror"/></svg>镜像</button>
            <button class="flex w-[55px] shrink-0 items-center gap-[4px]"><svg class="size-4"><use href="#move"/></svg>移动</button>
            <button class="flex w-[55px] shrink-0 items-center gap-[4px]"><svg class="size-4"><use href="#rotate"/></svg>旋转</button>
            <button class="flex w-[53px] shrink-0 items-center gap-[4px]"><svg class="size-4"><use href="#stretch"/></svg>拉伸</button>
            <div class="mr-[5px] h-[18px] w-px shrink-0 bg-[#d5d5d5]"></div>
            <button class="flex w-[62px] shrink-0 items-center gap-[4px]"><svg class="size-4"><use href="#extend"/></svg>延伸<svg class="ml-0.5 h-1 w-[6px] text-[#555]"><use href="#caret"/></svg></button>
            <button class="flex w-[61px] shrink-0 items-center gap-[4px]"><svg class="size-4"><use href="#break"/></svg>打断<svg class="ml-0.5 h-1 w-[6px] text-[#555]"><use href="#caret"/></svg></button>
            <div class="mr-[8px] h-[18px] w-px shrink-0 bg-[#d5d5d5]"></div>
            <button class="flex w-[76px] shrink-0 items-center gap-[4px]"><svg class="size-4"><use href="#shield"/></svg>截面校验</button>
            <div class="mr-[3px] h-full w-0.5 shrink-0 bg-[#c4c7d2]"></div>
            <div class="mr-[7px] h-[14px] w-0 shrink-0 border-l-2 border-dotted border-black"></div>
            <button class="flex w-[62px] shrink-0 items-center gap-[3px]"><svg class="size-4"><use href="#parallel"/></svg>平行<svg class="ml-[3px] h-1 w-[6px] text-[#555]"><use href="#caret"/></svg></button>
            <button class="flex shrink-0 items-center gap-[3px]"><svg class="size-4 shrink-0"><use href="#lenlock"/></svg>长度标注</button>
        </div>
        <div class="flex min-h-0 flex-1">
            <div class="flex w-[43px] shrink-0 flex-col items-center border-r border-[#c4c7d2] pr-[8px]">
                <div class="mt-[7px] ml-[6px] h-0 w-[26px] border-t-2 border-dotted border-black"></div>
                <button aria-label="点" class="mt-[5px] flex h-[22px] w-[26px] items-center justify-center"><svg class="size-[15px]"><use href="#point"/></svg></button>
                <button aria-label="直线" class="mt-[6px] flex h-[22px] w-[27px] items-center justify-center rounded-[3px] border border-[#4a9df0] bg-[#e5f1fd] text-[#3f84d4]"><svg class="size-4"><use href="#line"/></svg></button>
                <button aria-label="矩形" class="mt-[6px] flex h-[22px] w-[26px] items-center justify-center text-[#3f84d4]"><svg class="size-4"><use href="#rect"/></svg></button>
                <button aria-label="多边形" class="mt-[5px] flex h-[22px] w-[26px] items-center justify-center"><svg class="size-4"><use href="#penta"/></svg></button>
                <button aria-label="弧" class="mt-[5px] ml-[8px] flex h-[22px] items-center justify-center gap-[6px]"><svg class="size-4"><use href="#arc"/></svg><svg class="h-1 w-[6px] text-[#555]"><use href="#caret"/></svg></button>
                <button aria-label="圆" class="mt-[5px] flex h-[22px] w-[26px] items-center justify-center text-[#75828e]"><svg class="size-4"><use href="#circ"/></svg></button>
                <button aria-label="文字" class="mt-[5px] flex h-[22px] w-[26px] items-center justify-center"><svg class="size-4"><use href="#text"/></svg></button>
            </div>
            <div class="relative min-w-0 flex-1 overflow-hidden bg-black">
                <svg class="size-full">
                    <g transform="translate(-757 -465)" fill="none">
                        <g id="editor-grid"></g>
                        <path d="M1133.500 601.500h77v-20h38v77h-38v-19h-77z" stroke="#fff"/>
                        <path d="M1132 600h3v3h-3zM1209 600h3v3h-3zM1209 580h3v3h-3zM1247 580h3v3h-3zM1247 657h3v3h-3zM1209 657h3v3h-3zM1209 638h3v3h-3zM1132 638h3v3h-3z" fill="#e8e000" fill-opacity="0.7"/>
                        <g id="constraints"></g>
                        <path d="M1130 847l7 7M1137 847l-7 7" stroke="#f00" stroke-width="1.400"/>
                        <path d="M807 829v-20" stroke="#0f0" stroke-width="3"/><path d="M807 798l5 13h-10z" fill="#0f0"/>
                        <path d="M807 829h20" stroke="#f00" stroke-width="4"/><path d="M837 829l-12-5v10z" fill="#f00"/>
                        <circle cx="807" cy="829" r="5.500" fill="#00f"/>
                        <path d="M803 787l4 5 4-5M807 792v6" stroke="#0f0" stroke-width="1.300"/>
                        <path d="M839 823l8 12M847 823l-8 12" stroke="#f00" stroke-width="1.300"/>
                    </g>
                </svg>
                <label class="absolute top-[51px] left-[300px] flex h-5 w-[63px] items-center bg-white pl-0.5">
                    <input type="text" aria-label="X" value="-514" class="h-[18px] w-[27px] border-r border-black bg-[#0078d7] text-white outline-none">
                </label>
                <output class="absolute top-[51px] left-[372px] h-5 w-[64px] bg-[#999] pl-0.5 leading-5 text-black">Y:1869</output>
            </div>
        </div>
        <div class="flex h-[41px] shrink-0 items-center pt-px pl-px">
            <span class="w-[156px] text-[13px]">X=-514 Y=1869</span><span class="w-[66px] text-[13px]">0</span>
            <button aria-label="正交" class="mr-[6px] flex h-[25px] w-[25px] items-center justify-center border border-[#999] bg-[#cfcfd0]"><svg class="size-4"><use href="#ortho"/></svg></button>
            <button aria-label="捕捉" class="mr-[6px] flex h-[25px] w-9 items-center justify-between border border-[#3f97f0] px-[3px]"><svg class="size-4"><use href="#snap"/></svg><svg class="h-1 w-[6px] text-[#555]"><use href="#caret"/></svg></button>
            <button aria-label="输入" class="mr-[6px] flex h-[25px] w-9 items-center justify-between border border-[#3f97f0] px-[3px]"><svg class="size-4 text-[#3f84d4]"><use href="#plusbox"/></svg><svg class="h-1 w-[6px] text-[#555]"><use href="#caret"/></svg></button>
            <button aria-label="显示约束" class="mr-[6px] flex h-[25px] w-[25px] items-center justify-center border border-[#3f97f0]"><svg class="size-4"><use href="#bulbbox"/></svg></button>
            <button aria-label="检查" class="mr-[6px] flex h-[25px] w-9 items-center justify-between border border-[#3f97f0] px-[3px]"><svg class="size-4"><use href="#check"/></svg><svg class="h-1 w-[6px] text-[#555]"><use href="#caret"/></svg></button>
            <button aria-label="显示检查" class="mr-[6px] flex h-[25px] w-[25px] items-center justify-center border border-[#3f97f0]"><svg class="size-4"><use href="#checkbulb"/></svg></button>
            <span>指定第一点</span>
        </div>
    </div>

    <!-- Red markup over the windows -->
    <svg class="pointer-events-none absolute inset-0 size-full" fill="none" stroke="#fa3a36" stroke-width="3">
        <ellipse cx="325.500" cy="503.500" rx="35" ry="25"/>
        <ellipse cx="730" cy="284.500" rx="36" ry="41"/>
        <ellipse cx="987" cy="247" rx="49" ry="45"/>
        <ellipse cx="557.500" cy="769.500" rx="61.500" ry="62.500"/>
        <ellipse cx="1160" cy="598.500" rx="76" ry="57.500"/>
        <g id="arrows" fill="#fa3a36" stroke="none"></g>
    </svg>

    <script>
        const props = [
            ['名称', 'MKQ-1', false], ['洞口宽度(mm)', '2000', true], ['洞口高度(mm)', '2000', true],
            ['洞口数量', '1', true], ['洞口加筋', '2⌽16', true], ['加筋长度', '1100', true],
            ['左侧构造', '新建多边形-1', true], ['右侧构造', '悬臂式-1', true], ['上部构造', '有卧梁式-4', true],
            ['下部构造', '无卧梁式-2', true], ['材质', '现浇混凝土', true], ['混凝土类型', '(混凝土20石)', true],
            ['混凝土强度等级', '(C30)', true], ['混凝土外加剂', '(无)', false], ['泵送类型', '(混凝土泵)', false],
            ['泵送高度(m)', '2.901', false]
        ];
        // Rebar grade sign, drawn because no font carries it
        const rebar = '<svg class="mx-px inline-block h-[11px] w-[9px] align-[1px]"><path d="M4.500 0v10M0 6.500h9M1 8.500h7" stroke="#000"/><ellipse cx="4.500" cy="4" rx="3.500" ry="2.500" fill="none" stroke="#000"/></svg>';

        document.getElementById('props').innerHTML = props.map(([name, value, extra], i) => {
            const n = i + 1;
            const num = n === 7 ? 'bg-[#80bbfb] font-bold text-white' : 'bg-[#efefef] text-[#444]';
            const label = n === 16 ? 'text-black' : 'text-[#1a5cff]';
            let cell = 'border-r border-b border-[#d0d0d0] pl-[3px]';
            if (n === 7) cell = 'border-2 border-[#808080] pl-px';
            if (n === 16) cell = 'border-r border-b border-[#d0d0d0] bg-[#e8e8e8] pl-[3px] text-[#999]';
            return `<tr>
                <td class="h-[21px] border-r border-b border-[#d0d0d0] p-0 ${num}"><div class="h-5 ${n < 10 ? 'pl-[3px]' : ''} leading-[22px]">${n}</div></td>
                <td class="h-[21px] border-r border-b border-[#d0d0d0] p-0 pl-[3px] ${label}"><div class="h-5 leading-[22px]">${name}</div></td>
                <td class="h-[21px] py-0 pr-0 leading-[17px] ${cell}">${value.replace('⌽', rebar)}</td>
                <td class="h-[21px] border-r border-b border-[#d0d0d0] p-0">${extra ? `<input type="checkbox" aria-label="附加 ${name}" class="mx-auto block size-[14px] appearance-none rounded-[3px] border border-[#808080] bg-white">` : ''}</td>
            </tr>`;
        }).join('');

        // Axis bubbles
        const bubbles = [[583.5, 106.5, 'E'], [583.5, 272, 'D'], [583.5, 437, 'C'], [844, 1003, '1'], [1008.5, 1003, '2'], [1174, 1003, '3'], [1339, 1003, '4']];
        document.getElementById('bubbles').innerHTML = bubbles.map(([x, y, t]) => {
            const pts = [];
            for (let a = 0; a < 10; a++) pts.push((x + 12 * Math.cos(a * Math.PI / 5)) + ',' + (y + 12 * Math.sin(a * Math.PI / 5)));
            return `<polygon points="${pts.join(' ')}" stroke-width="1.3"/><text x="${x}" y="${y + 6}" text-anchor="middle" class="fill-white stroke-none text-[17px]">${t}</text>`;
        }).join('');

        // Background grid of the section window
        let lines = '';
        [292, 332, 373, 413, 453, 494, 534, 574, 615, 655, 695].forEach(x => lines += `<path d="M${x + 0.5} 588v387"/>`);
        [588, 629, 669, 709, 750, 790, 830, 871, 911, 951].forEach(y => lines += `<path d="M287 ${y + 0.5}h409"/>`);
        document.getElementById('section-grid').innerHTML = lines;

        // 10 x 20 grid with 100mm spacing labels
        const step = 19.2;
        let grid = '<path d="M1109.500 466v385" stroke="#003c00"/>';
        for (let r = 0; r <= 20; r++) {
            const y = 466.5 + r * step;
            grid += `<path d="M1106 ${y}h27M1106 ${y + 3}l6 -6" stroke="#003c00"/><path d="M1133 ${y}h193" stroke="#74343a" stroke-width="1.300"/>`;
            if (r < 20) grid += `<text x="1114" y="${y + 16}" text-anchor="middle" class="fill-white text-[16px]">100</text>`;
        }
        for (let c = 0; c <= 10; c++) {
            const x = 1133.5 + c * step;
            grid += `<path d="M${x} 851v28" stroke="#003c00"/><path d="M${x} 466v385" stroke="#74343a" stroke-width="1.300"/>`;
            if (c < 10) grid += `<text x="${x + 9.5}" y="875" text-anchor="middle" class="fill-white text-[16px]">100</text>`;
        }
        document.getElementById('editor-grid').innerHTML = grid;

        const marks = [[1170, 577, 0.4], [1170, 615, 0.4], [1207, 567, 0.65], [1227, 558, 0.65], [1247, 587, 0.4], [1247, 625, 0.4], [1207, 625, 0.65], [1227, 635, 0.65]];
        document.getElementById('constraints').innerHTML = marks.map(([x, y, o]) =>
            `<rect x="${x}" y="${y}" width="24" height="24" fill="#e8e8e8" fill-opacity="${o}"/><use href="#constraint" x="${x}" y="${y}" width="24" height="24"/>`
        ).join('');

        // Arrows widen from tail to head
        const arrows = [[333, 503, 706, 301, 4], [730, 296, 1118, 579, 6], [945, 281, 581, 747, 5], [1153, 568, 989, 261, 5]];
        document.getElementById('arrows').innerHTML = arrows.map(([x1, y1, x2, y2, w]) => {
            const len = Math.hypot(x2 - x1, y2 - y1);
            const h = w / 2;
            const neck = len - 10;
            return `<polygon transform="translate(${x1} ${y1}) rotate(${Math.atan2(y2 - y1, x2 - x1) * 180 / Math.PI})" points="0,-0.4 ${neck},${-h} ${neck},-5.500 ${len},0 ${neck},5.500 ${neck},${h} 0,0.4"/>`;
        }).join('');
    </script>
</body>
</html>
